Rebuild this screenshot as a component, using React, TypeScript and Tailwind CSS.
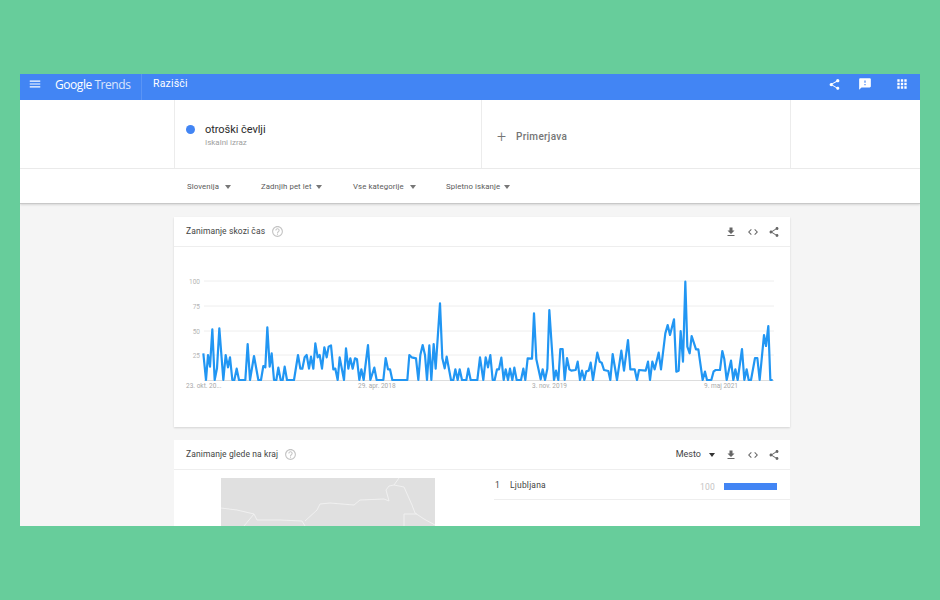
const SHARE =
  "M18 16.08c-.76 0-1.44.3-1.96.77L8.91 12.7c.05-.23.09-.46.09-.7s-.04-.47-.09-.7l7.05-4.11c.54.5 1.25.81 2.04.81 1.66 0 3-1.34 3-3s-1.34-3-3-3-3 1.34-3 3c0 .24.04.47.09.7L8.04 9.81C7.5 9.31 6.79 9 6 9c-1.66 0-3 1.34-3 3s1.34 3 3 3c.79 0 1.5-.31 2.04-.81l7.12 4.16c-.05.21-.08.43-.08.65 0 1.61 1.31 2.92 2.92 2.92 1.61 0 2.92-1.31 2.92-2.92s-1.31-2.92-2.92-2.92z";
const DOWNLOAD = "M19 9h-4V3H9v6H5l7 7 7-7zM5 18v2h14v-2H5z";
const CODE =
  "M9.4 16.6L4.8 12l4.6-4.6L8 6l-6 6 6 6 1.4-1.4zm5.2 0l4.6-4.6-4.6-4.6L16 6l6 6-6 6-1.4-1.4z";
const FEEDBACK =
  "M20 2H4c-1.1 0-1.99.9-1.99 2L2 22l4-4h14c1.1 0 2-.9 2-2V4c0-1.1-.9-2-2-2zm-7 12h-2v-2h2v2zm0-4h-2V6h2v4z";
const APPS =
  "M4 8h4V4H4v4zm6 12h4v-4h-4v4zm-6 0h4v-4H4v4zm0-6h4v-4H4v4zm6 0h4v-4h-4v4zm6-10v4h4V4h-4zm-6 4h4V4h-4v4zm6 6h4v-4h-4v4zm0 6h4v-4h-4v4z";
const MENU = "M3 18h18v-2H3v2zm0-5h18v-2H3v2zm0-7v2h18V6H3z";
const HELP =
  "M11 18h2v-2h-2v2zm1-16C6.48 2 2 6.48 2 12s4.48 10 10 10 10-4.48 10-10S17.52 2 12 2zm0 18c-4.41 0-8-3.59-8-8s3.59-8 8-8 8 3.59 8 8-3.59 8-8 8zm0-14c-2.21 0-4 1.79-4 4h2c0-1.1.9-2 2-2s2 .9 2 2c0 2-3 1.75-3 5h2c0-2.25 3-2.5 3-5 0-2.21-1.79-4-4-4z";

// traced at 3x: left half starts at x=170, right half at x=480, both at y=270
const leftHalf = [
  [100, 250], [108, 330], [114, 255], [120, 290], [127, 178], [134, 330], [141, 295], [148, 175], [160, 330],
  [167, 255], [174, 292], [180, 262], [187, 330], [193, 330], [200, 296], [207, 330], [226, 330], [233, 222],
  [240, 330], [252, 258], [265, 330], [273, 330], [280, 288], [286, 292], [292, 172], [299, 290], [305, 250],
  [312, 330], [319, 330], [325, 293], [332, 330], [338, 330], [344, 290], [351, 330], [372, 330], [384, 255],
  [391, 296], [397, 296], [404, 262], [410, 255], [417, 296], [423, 260], [430, 296], [436, 220], [443, 262],
  [449, 255], [456, 296], [463, 232], [470, 262], [476, 230], [483, 226], [490, 298], [496, 296], [503, 330],
  [509, 262], [522, 330], [528, 235], [535, 296], [541, 265], [548, 296], [555, 265], [561, 268], [568, 330],
  [574, 298], [581, 330], [594, 225], [601, 330], [613, 293], [620, 330], [640, 330], [647, 264], [654, 298],
  [660, 298], [667, 330], [712, 330], [718, 255], [725, 262], [738, 265], [745, 330], [751, 255], [758, 225],
  [765, 255], [771, 330], [778, 226], [784, 330], [791, 222], [797, 296], [810, 100], [817, 265], [824, 295],
  [830, 260], [843, 330], [850, 330], [856, 298], [863, 330], [869, 298], [876, 330], [889, 330], [895, 296],
  [902, 330], [922, 330],
];
const rightHalf = [
  [0, 262], [10, 330], [17, 262], [24, 292], [31, 255], [38, 330], [44, 330], [51, 298], [57, 298], [64, 263],
  [71, 330], [77, 298], [84, 330], [90, 296], [97, 330], [103, 293], [110, 330], [123, 330], [130, 296],
  [136, 330], [143, 265], [156, 266], [162, 130], [169, 268], [182, 328], [188, 298], [195, 330], [202, 296],
  [208, 120], [222, 330], [228, 302], [235, 330], [241, 237], [248, 237], [254, 330], [261, 264], [268, 298],
  [274, 302], [287, 300], [293, 275], [300, 330], [306, 302], [313, 330], [319, 304], [326, 302], [332, 278],
  [339, 330], [352, 248], [359, 275], [365, 278], [372, 300], [385, 303], [391, 330], [398, 252], [411, 330],
  [424, 242], [432, 302], [444, 210], [451, 298], [464, 298], [471, 330], [477, 300], [497, 302], [504, 275],
  [510, 330], [517, 275], [524, 298], [536, 248], [543, 298], [556, 190], [563, 165], [570, 195], [582, 148],
  [589, 305], [596, 302], [602, 183], [609, 275], [616, 35], [622, 230], [629, 250], [635, 198], [648, 238],
  [655, 238], [668, 330], [675, 305], [681, 330], [694, 330], [701, 304], [707, 300], [720, 300], [727, 243],
  [733, 268], [740, 330], [753, 272], [760, 330], [766, 298], [773, 330], [786, 237], [793, 330], [800, 298],
  [806, 330], [813, 330], [825, 264], [832, 264], [839, 330], [852, 195], [858, 228], [865, 168], [871, 330],
  [878, 330],
];

// card body starts at x=174, y=247
const toPoints = (data: number[][], originX: number) =>
  data.map(([x, y]) => `${originX + x / 3 - 174},${270 + y / 3 - 247}`).join(" ");
const trendLine = toPoints(leftHalf, 170) + " " + toPoints(rightHalf, 480);

function Icon({ d, className }: { d: string; className: string }) {
  return (
    <svg viewBox="0 0 24 24" className={className} fill="currentColor">
      <path d={d} />
    </svg>
  );
}

function Caret({ className }: { className: string }) {
  return <span className={`w-0 h-0 border-x-[3.5px] border-x-transparent border-t-[4px] ${className}`} />;
}

function Filter({ label, width, gap }: { label: string; width: string; gap: string }) {
  return (
    <div className={`flex items-center ${gap} text-[7.8px] tracking-[0.1px] text-[#5a5a5a] ${width}`}>
      <span>{label}</span>
      <Caret className="border-t-[#777]" />
    </div>
  );
}

function CardActions() {
  return (
    <div className="flex items-center gap-[9.5px] text-[#666]">
      <Icon d={DOWNLOAD} className="w-[12px] h-[12px]" />
      <Icon d={CODE} className="w-[12px] h-[12px]" />
      <Icon d={SHARE} className="w-[12px] h-[12px]" />
    </div>
  );
}

function TrendChart() {
  const grid = [
    { y: 34, label: "100" },
    { y: 59, label: "75" },
    { y: 84, label: "50" },
    { y: 108, label: "25" },
  ];
  return (
    <svg viewBox="0 0 616 180" className="block w-[616px] h-[180px]">
      {grid.map((g) => (
        <g key={g.label}>
          <line x1="30" x2="600" y1={g.y} y2={g.y} stroke="#eeeeee" />
          <text x="26" y={g.y + 2.5} textAnchor="end" fontSize="6.5" fill="#b5b5b5">
            {g.label}
          </text>
        </g>
      ))}
      <line x1="30" x2="600" y1="133.5" y2="133.5" stroke="#dddddd" />
      <polyline points={trendLine} fill="none" stroke="#2196f3" strokeWidth="2.2" strokeLinejoin="round" />
      <text x="12" y="141" fontSize="6.5" fill="#a8a8a8">23. okt. 20...</text>
      <text x="184" y="141" fontSize="6.5" fill="#a8a8a8">29. apr. 2018</text>
      <text x="358" y="141" fontSize="6.5" fill="#a8a8a8">3. nov. 2019</text>
      <text x="530" y="141" fontSize="6.5" fill="#a8a8a8">9. maj 2021</text>
    </svg>
  );
}

function RegionMap() {
  return (
    <svg viewBox="0 0 214 48" className="block w-[214px] h-[48px]">
      <rect width="214" height="48" fill="#e0e0e0" />
      <path
        d="M0 30 L16 32 L33 36 L36 42 L59 42 L81 43 L84 48 M84 43 L96 32 L99 26 L109 25 L133 27 L139 22 L163 21 L168 23 L165 12 L168 8 L173 7 L178 0 M173 7 L183 9 L191 27 L194 35 L203 41 L214 47 M183 36 L183 48 M183 36 L196 36 M33 36 L23 48"
        fill="none"
        stroke="#f2f2f2"
        strokeWidth="0.9"
      />
    </svg>
  );
}

export default function App() {
  return (
    <div className="w-[940px] h-[600px] bg-[#67cd9b] pt-[74px] px-[20px] overflow-hidden font-['Roboto',sans-serif]">
      <div className="h-[452px] bg-[#f5f5f5] overflow-hidden">
        {/* Top bar */}
        <header className="h-[26px] bg-[#4285f4] flex items-center text-white">
          <Icon d={MENU} className="w-[14px] h-[14px] ml-[8px] -mt-[6px]" />
          <span className="ml-[13px] w-[76px] text-[12px] -mt-[5px] font-['Open_Sans',sans-serif] tracking-[-0.45px] whitespace-nowrap">
            <span className="font-medium">Google</span> <span className="opacity-80">Trends</span>
          </span>
          <span className="ml-[10px] w-px h-[26px] bg-[#5a94f5]" />
          <span className="ml-[11px] text-[10.5px] tracking-[0.2px] -mt-[6px]">Razišči</span>
          <div className="ml-auto flex items-center -mt-[6px]">
            <Icon d={SHARE} className="w-[13px] h-[13px]" />
            <Icon d={FEEDBACK} className="w-[14px] h-[14px] ml-[17px]" />
            <Icon d={APPS} className="w-[14px] h-[14px] ml-[23px] mr-[11px]" />
          </div>
        </header>

        {/* Search terms */}
        <div className="h-[69px] bg-white border-b border-[#ececec] pl-[154px]">
          <div className="w-[617px] h-full border-x border-[#ececec] flex">
            <div className="w-[307px] border-r border-[#ececec] pl-[11px] pt-[23px] flex items-start gap-[10px]">
              <span className="w-[9px] h-[9px] rounded-full bg-[#4285f4] mt-[2px]" />
              <div>
                <div className="text-[11px] leading-[13px] text-[#2a2a2a] tracking-[-0.05px]">otroški čevlji</div>
                <div className="text-[8px] leading-[10px] mt-[2px] text-[#a0a0a0]">Iskalni izraz</div>
              </div>
            </div>
            <div className="flex items-center pl-[15px] pt-[5px] text-[#757575]">
              <span className="text-[16px] leading-[16px] font-light w-[19px]">+</span>
              <span className="text-[10px] font-medium tracking-[0.3px]">Primerjava</span>
            </div>
          </div>
        </div>

        {/* Filters */}
        <div className="h-[35px] bg-white border-b border-[#c8c8c8] shadow-[0_1px_2px_rgba(0,0,0,0.12)] pl-[167px] pt-[1px] flex items-center">
          <Filter label="Slovenija" width="w-[74px]" gap="gap-[6px]" />
          <Filter label="Zadnjih pet let" width="w-[92px]" gap="gap-[4px]" />
          <Filter label="Vse kategorije" width="w-[93px]" gap="gap-[6px]" />
          <Filter label="Spletno iskanje" width="w-[80px]" gap="gap-[4px]" />
        </div>

        <div className="ml-[154px] w-[616px] pt-[13px] flex flex-col gap-[13px]">
          {/* Interest over time */}
          <section className="h-[210px] bg-white shadow-[0_1px_2px_rgba(0,0,0,0.14)]">
            <div className="h-[30px] border-b border-[#eeeeee] flex items-center pl-[12px] pr-[10px]">
              <span className="text-[8.5px] tracking-[0.1px] text-[#444]">Zanimanje skozi čas</span>
              <Icon d={HELP} className="w-[13px] h-[13px] ml-[6px] text-[#c4c4c4]" />
              <div className="ml-auto">
                <CardActions />
              </div>
            </div>
            <TrendChart />
          </section>

          {/* Interest by region */}
          <section className="bg-white h-[120px]">
            <div className="h-[30px] border-b border-[#eeeeee] flex items-center pl-[12px] pr-[10px]">
              <span className="text-[8.5px] tracking-[0.1px] text-[#444]">Zanimanje glede na kraj</span>
              <Icon d={HELP} className="w-[13px] h-[13px] ml-[6px] text-[#c4c4c4]" />
              <div className="ml-auto flex items-center">
                <span className="text-[9px] text-[#444]">Mesto</span>
                <Caret className="ml-[8px] mr-[10px] border-t-[#333]" />
                <CardActions />
              </div>
            </div>
            <div className="flex">
              <div className="ml-[47px] mt-[8px]">
                <RegionMap />
              </div>
              <div className="ml-[59px] flex-1">
                <div className="h-[30px] border-b border-[#eeeeee] flex items-start text-[8.5px] text-[#444]">
                  <span className="w-[16px] pl-[1px] mt-[9px] leading-[12px]">1</span>
                  <span className="mt-[9px] leading-[12px] tracking-[0.2px]">Ljubljana</span>
                  <span className="ml-auto mt-[11px] leading-[12px] text-[#c4c4c4] tracking-[0.2px]">100</span>
                  <span className="ml-[9px] mr-[13px] mt-[13px] w-[53px] h-[7px] bg-[#4285f4]" />
                </div>
              </div>
            </div>
          </section>
        </div>
      </div>
    </div>
  );
}
